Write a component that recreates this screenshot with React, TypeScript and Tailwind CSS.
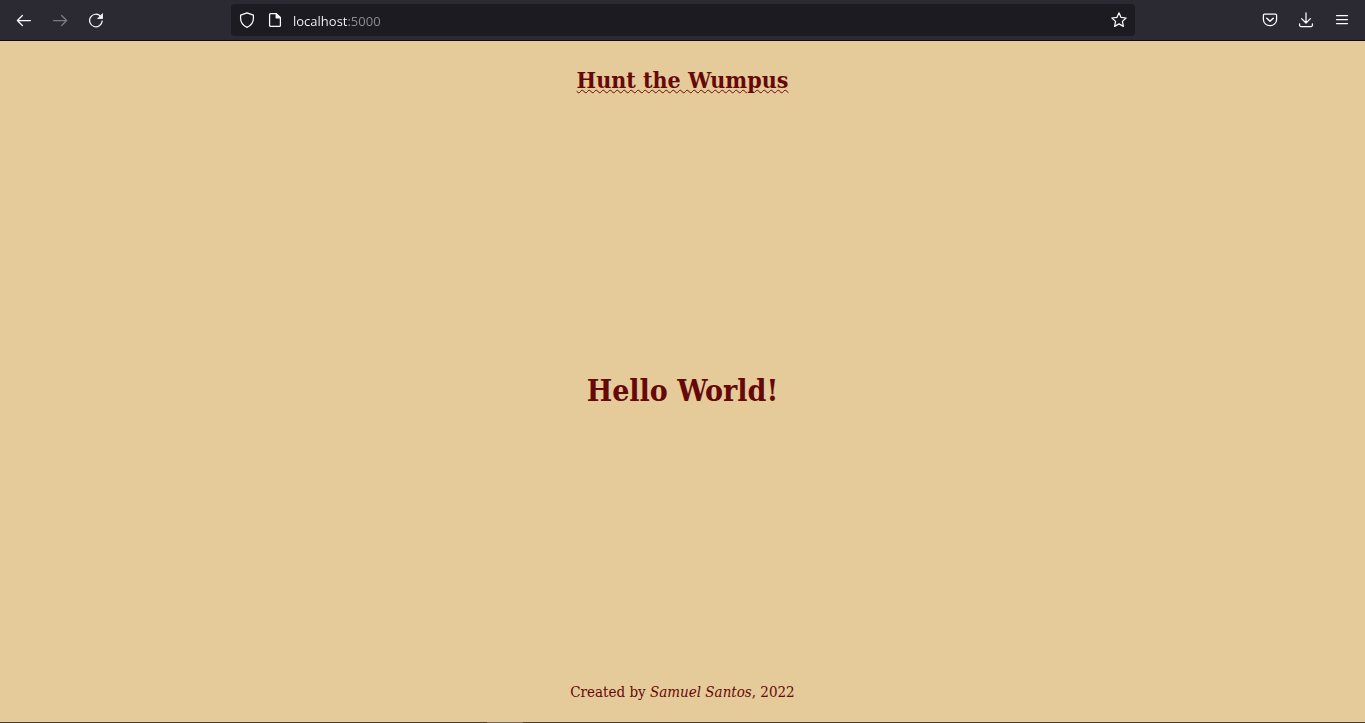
import type { ReactNode } from "react";

type IconButtonProps = { label: string; disabled?: boolean; children: ReactNode };

function IconButton({ label, disabled = false, children }: IconButtonProps) {
  return (
    <button
      type="button"
      aria-label={label}
      disabled={disabled}
      className="flex size-8 items-center justify-center rounded text-[#fbfbfe] disabled:text-[#7d7b85]"
    >
      {children}
    </button>
  );
}

function Icon({ children }: { children: ReactNode }) {
  return (
    <svg
      viewBox="0 0 16 16"
      className="size-4 shrink-0"
      fill="none"
      stroke="currentColor"
      strokeWidth="1.25"
      strokeLinecap="round"
      strokeLinejoin="round"
      aria-hidden="true"
    >
      {children}
    </svg>
  );
}

function Toolbar() {
  return (
    <div className="flex h-[41px] items-center border-b border-[#0c0c0d] bg-[#2b2a33]">
      <nav aria-label="History" className="flex w-[231px] gap-1 pl-2">
        <IconButton label="Back">
          <Icon>
            <path d="M14.4 8.5H1.6M6.4 3.5l-5 5 5 5" />
          </Icon>
        </IconButton>
        <IconButton label="Forward" disabled>
          <Icon>
            <path d="M1.6 8.5h12.8M9.6 3.5l5 5-5 5" />
          </Icon>
        </IconButton>
        <IconButton label="Reload">
          <Icon>
            <path d="M14.2 9A6.3 6.3 0 1 1 12.5 4.2" />
            <path d="M14.5 2v4.5H10z" fill="currentColor" strokeWidth="0.8" />
          </Icon>
        </IconButton>
      </nav>

      <div className="flex h-8 flex-1 items-center gap-3 rounded bg-[#1c1b22] px-2 text-[#fbfbfe]">
        <Icon>
          <path d="M8 .8 14.4 3.2v3.3c0 4-2.4 7-6.4 8.9C4 13.5 1.6 10.5 1.6 6.5V3.2z" />
        </Icon>
        <Icon>
          <path d="M3.6 1.6h5.6l4.2 4.2v7.6a1 1 0 0 1-1 1H3.6a1 1 0 0 1-1-1V2.6a1 1 0 0 1 1-1z" />
          <path d="M9.2 1.6v4.2h4.2z" fill="currentColor" />
        </Icon>
        <input
          type="text"
          aria-label="Address"
          defaultValue="localhost:5000"
          spellCheck={false}
          className="-ml-0.5 min-w-0 flex-1 bg-[linear-gradient(to_right,#fbfbfe_55px,#8f8f98_55px)] bg-clip-text pt-0.5 font-['Open_Sans',sans-serif] text-[13px] leading-5 text-transparent caret-white outline-none"
        />
        <button type="button" aria-label="Bookmark this page" className="flex">
          <Icon>
            <path d="M8 .8l2.1 4.6 5 .6-3.7 3.4 1 5L8 11.9l-4.4 2.5 1-5L.9 6l5-.6z" />
          </Icon>
        </button>
      </div>

      <div className="flex w-[230px] justify-end gap-1 pr-[7px]">
        <IconButton label="Save to Pocket">
          <Icon>
            <path d="M2.6 2h10.8a1.2 1.2 0 0 1 1.2 1.2V7.4a6.6 6.3 0 0 1-13.2 0V3.2A1.2 1.2 0 0 1 2.6 2z" />
            <path d="M4.8 6.2 8 9.3l3.2-3.1" strokeWidth="1.5" />
          </Icon>
        </IconButton>
        <IconButton label="Downloads">
          <Icon>
            <path d="M8 .8v10M3.6 6.6 8 11l4.4-4.4M1.6 11.8v1.4a1.3 1.3 0 0 0 1.3 1.3h10.2a1.3 1.3 0 0 0 1.3-1.3v-1.4" />
          </Icon>
        </IconButton>
        <IconButton label="Open menu">
          <Icon>
            <path d="M2.5 3.5h11M2.5 7.5h11M2.5 11.5h11" />
          </Icon>
        </IconButton>
      </div>
    </div>
  );
}

export default function App() {
  return (
    <div className="flex min-h-screen flex-col bg-[#e5cb9a] font-['DejaVu_Serif_Condensed','DejaVu_Serif',serif] text-[#660708]">
      <Toolbar />
      <header className="flex justify-center pt-6 pb-1">
        <h1 className="text-[23px] leading-[30px] font-bold underline decoration-wavy decoration-1">
          Hunt the Wumpus
        </h1>
      </header>
      <main className="flex flex-1 items-center justify-center">
        <h2 className="text-3xl leading-10 font-bold">Hello World!</h2>
      </main>
      <footer className="pb-5 text-center text-[15px] leading-5">
        Created by <em>Samuel Santos</em>, 2022
      </footer>
      <div className="flex h-px bg-[#4a3b2c]">
        <div className="ml-[487px] w-9 bg-[#7a675a]" />
      </div>
    </div>
  );
}
